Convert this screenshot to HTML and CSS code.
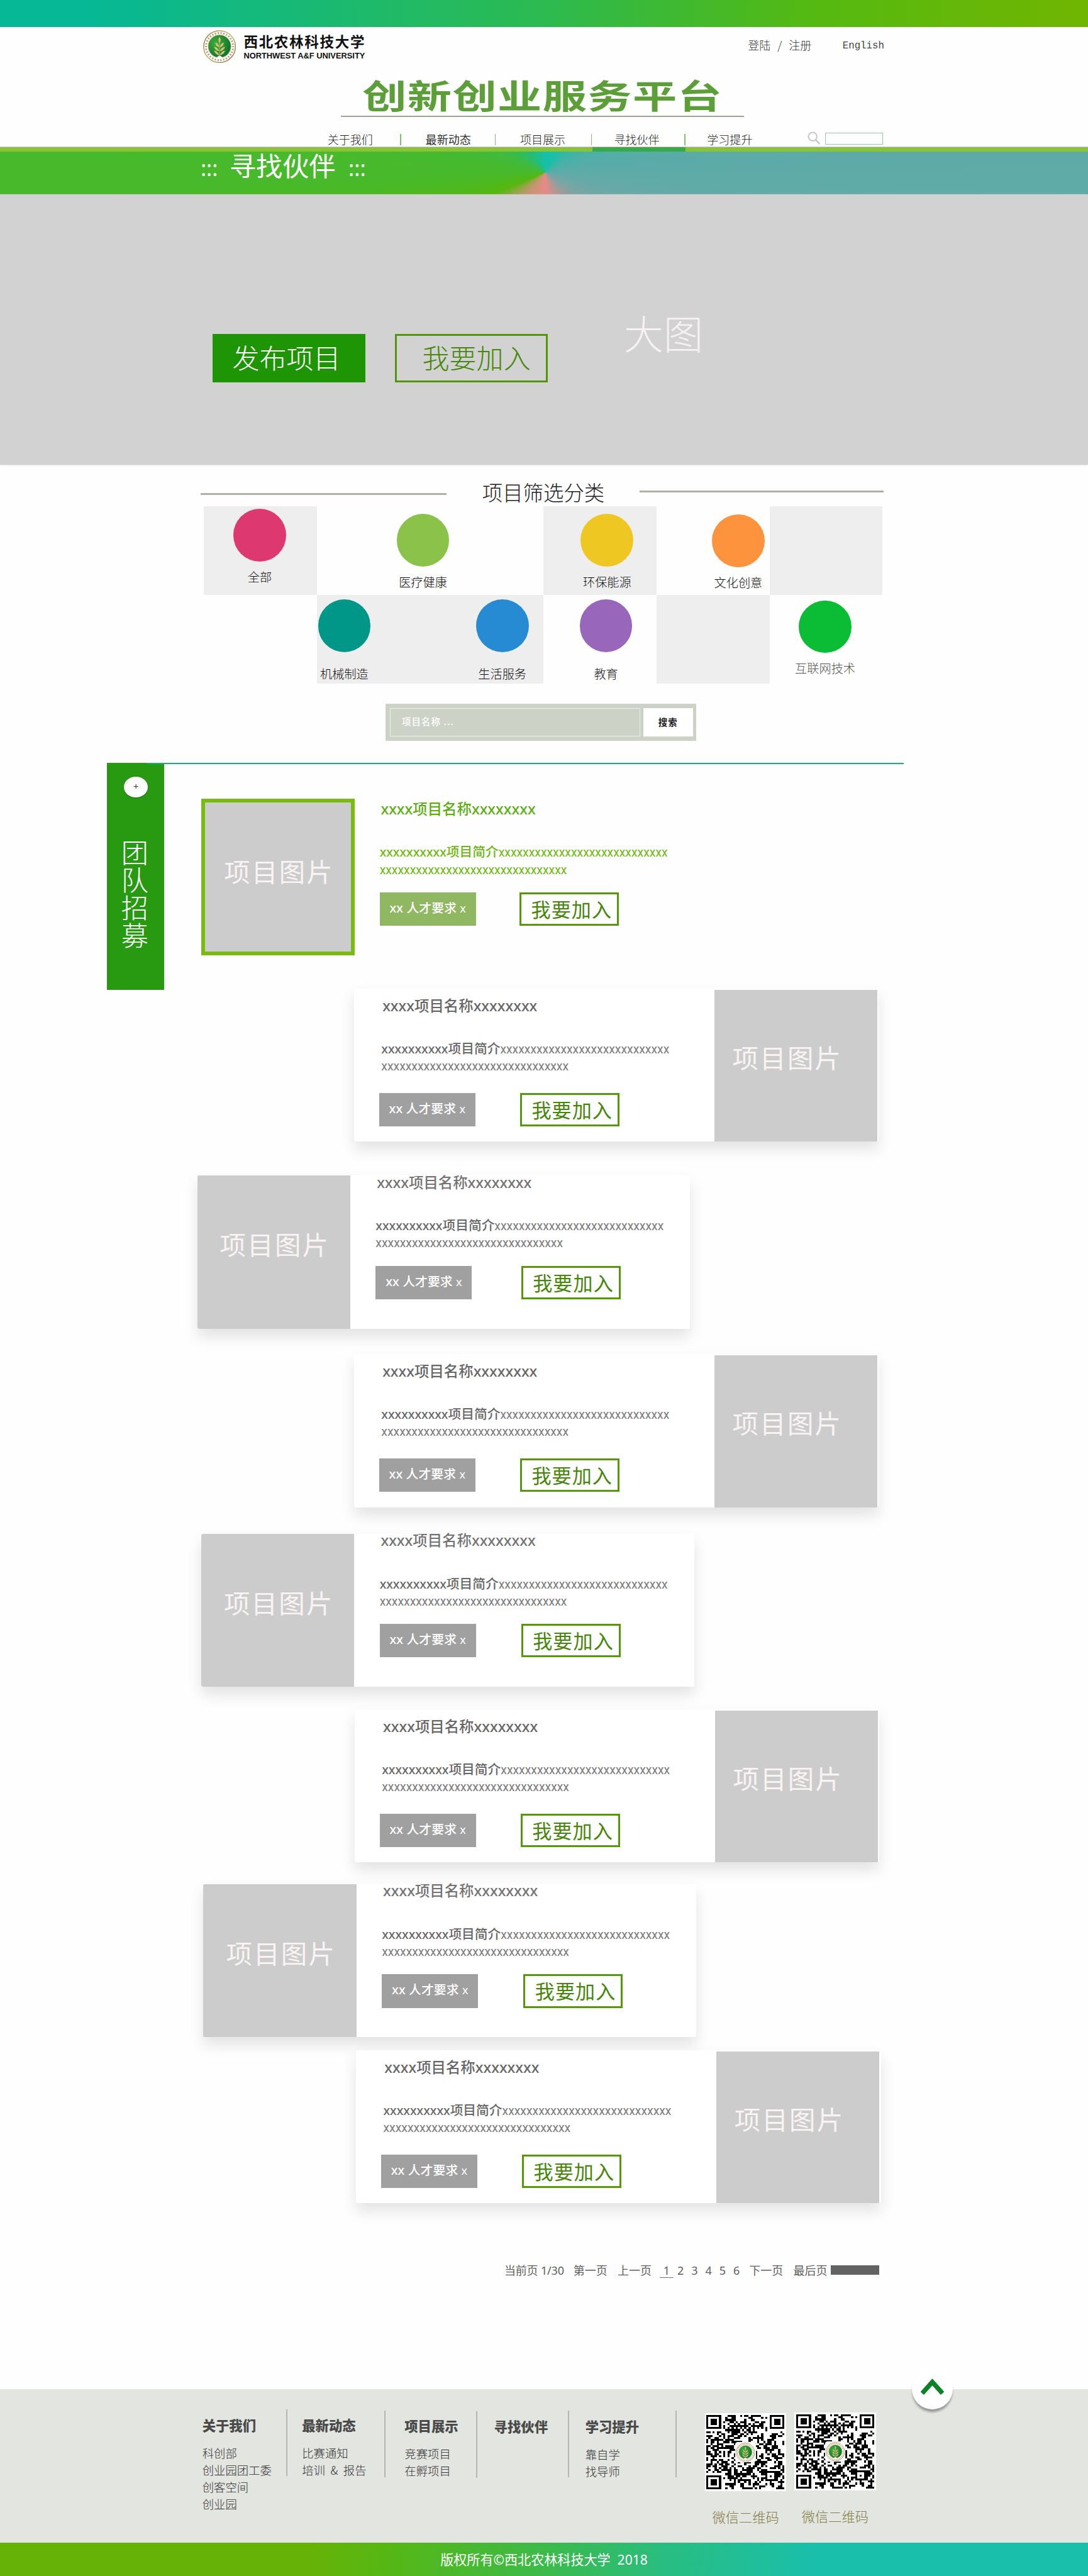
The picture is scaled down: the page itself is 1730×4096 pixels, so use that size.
FILE: index.html
```html
<!DOCTYPE html>
<html lang="zh-CN">
<head>
<meta charset="utf-8">
<title>创新创业服务平台 - 寻找伙伴</title>
<link rel="stylesheet" href="styles.css">
</head>
<body>
<svg width="0" height="0" class="defs">
  <defs>
    <linearGradient id="gold" x1="0" y1="0" x2="1" y2="1"><stop offset="0" stop-color="#8a6a2a"/><stop offset=".5" stop-color="#c9ad62"/><stop offset="1" stop-color="#86662a"/></linearGradient>
    <radialGradient id="leafbg" cx=".35" cy=".35" r=".75"><stop offset="0" stop-color="#3fae3c"/><stop offset="1" stop-color="#06702c"/></radialGradient>
    <symbol id="emblem" viewBox="0 0 58 58">
      <circle cx="29" cy="29" r="28" fill="#fff" stroke="url(#gold)" stroke-width="1.6"/>
      <circle cx="29" cy="29" r="24" fill="none" stroke="#8d7136" stroke-width="3.4" stroke-dasharray="2.2 2.8" stroke-dashoffset="1" opacity=".7"/>
      <circle cx="29" cy="28.500" r="20" fill="url(#leafbg)" stroke="#b99a50" stroke-width="1"/>
      <path d="M23 50 Q29 40 35 50 Z" fill="#fff"/>
      <g fill="#e0bd72">
        <path d="M29 12q4 5 0 11q-4-6 0-11z"/>
        <path d="M28.300 30q-6-1-7-8q6 1 7 8zM29.700 30q6-1 7-8q-6 1-7 8z"/>
        <path d="M28.300 37q-7-1-9-8q7 1 9 8zM29.700 37q7-1 9-8q-7 1-9 8z"/>
        <path d="M28.300 44q-7-1-9-8q7 1 9 8zM29.700 44q7-1 9-8q-7 1-9 8z"/>
        <path d="M28.500 22h1v24h-1z"/>
      </g>
    </symbol>
  </defs>
</svg>
<div class="page">
  <div class="topbar"></div>
  <header class="header">
    <div class="brand-row">
      <svg class="emblem"><use href="#emblem"/></svg>
      <div class="brand-text">
        <div class="brand-cn">西北农林科技大学</div>
        <div class="brand-en">NORTHWEST A&amp;F UNIVERSITY</div>
      </div>
      <div class="login">登陆<span class="slash">/</span>注册</div>
      <div class="lang">English</div>
    </div>
    <div class="site-title"><span>创新创业服务平台</span></div>
    <nav class="nav">
      <a>关于我们</a><i class="sep s1"></i>
      <a class="strong">最新动态</a><i class="sep s2"></i>
      <a>项目展示</a><i class="sep s3"></i>
      <a>寻找伙伴</a><i class="sep s4"></i>
      <a>学习提升</a>
      <svg class="lens" viewBox="0 0 24 24"><circle cx="9.500" cy="9.500" r="7.800" fill="none" stroke="#c8c8c8" stroke-width="2.400"/><path d="M15 15.500L22.500 23" stroke="#c8c8c8" stroke-width="3"/></svg>
      <div class="nav-search"></div>
    </nav>
  </header>
  <div class="greenline"><div class="active"></div></div>
  <div class="banner"><span class="dots">:::</span><h1>寻找伙伴</h1><span class="dots">:::</span></div>
  <section class="hero">
    <div class="hero-btn solid">发布项目</div>
    <div class="hero-btn outline">我要加入</div>
    <div class="hero-label">大图</div>
  </section>

  <section class="filter">
    <div class="filter-head"><i class="rule"></i><h2>项目筛选分类</h2><i class="rule r"></i></div>
    <div class="cats">
      <div class="cell g"><div class="cat c1"><i></i><b>全部</b></div></div>
      <div class="cell"><div class="cat c2"><i></i><b>医疗健康</b></div></div>
      <div class="cell"></div>
      <div class="cell g"><div class="cat c3"><i></i><b>环保能源</b></div></div>
      <div class="cell"><div class="cat c4"><i></i><b>文化创意</b></div></div>
      <div class="cell g"></div>
      <div class="cell"></div>
      <div class="cell g"><div class="cat c5"><i></i><b>机械制造</b></div></div>
      <div class="cell g"><div class="cat c6"><i></i><b>生活服务</b></div></div>
      <div class="cell"><div class="cat c7"><i></i><b>教育</b></div></div>
      <div class="cell g"></div>
      <div class="cell"><div class="cat c8"><i></i><b>互联网技术</b></div></div>
    </div>
    <div class="search"><div class="field">项目名称 ...</div><div class="go">搜索</div></div>
  </section>

  <section class="team">
    <aside class="side"><div class="plus">+</div><div class="side-text">团队招募</div></aside>
    <div class="list">
      <div class="teal"></div>
      <article class="card left featured k1"><div class="photo">项目图片</div><div class="body"><h3><u>xxxx</u>项目名称<u>xxxxxxxx</u></h3><p><u>xxxxxxxxxx</u>项目简介<span>xxxxxxxxxxxxxxxxxxxxxxxxxxxx</span><br><span>xxxxxxxxxxxxxxxxxxxxxxxxxxxxxxx</span></p><div class="acts"><div class="tag"><u>xx</u> 人才要求 <span>x</span></div><div class="join">我要加入</div></div></div></article>
      <article class="card right k2"><div class="body"><h3><u>xxxx</u>项目名称<u>xxxxxxxx</u></h3><p><u>xxxxxxxxxx</u>项目简介<span>xxxxxxxxxxxxxxxxxxxxxxxxxxxx</span><br><span>xxxxxxxxxxxxxxxxxxxxxxxxxxxxxxx</span></p><div class="acts"><div class="tag"><u>xx</u> 人才要求 <span>x</span></div><div class="join">我要加入</div></div></div><div class="photo">项目图片</div></article>
      <article class="card left k3"><div class="photo">项目图片</div><div class="body"><h3><u>xxxx</u>项目名称<u>xxxxxxxx</u></h3><p><u>xxxxxxxxxx</u>项目简介<span>xxxxxxxxxxxxxxxxxxxxxxxxxxxx</span><br><span>xxxxxxxxxxxxxxxxxxxxxxxxxxxxxxx</span></p><div class="acts"><div class="tag"><u>xx</u> 人才要求 <span>x</span></div><div class="join">我要加入</div></div></div></article>
      <article class="card right k4"><div class="body"><h3><u>xxxx</u>项目名称<u>xxxxxxxx</u></h3><p><u>xxxxxxxxxx</u>项目简介<span>xxxxxxxxxxxxxxxxxxxxxxxxxxxx</span><br><span>xxxxxxxxxxxxxxxxxxxxxxxxxxxxxxx</span></p><div class="acts"><div class="tag"><u>xx</u> 人才要求 <span>x</span></div><div class="join">我要加入</div></div></div><div class="photo">项目图片</div></article>
      <article class="card left k5"><div class="photo">项目图片</div><div class="body"><h3><u>xxxx</u>项目名称<u>xxxxxxxx</u></h3><p><u>xxxxxxxxxx</u>项目简介<span>xxxxxxxxxxxxxxxxxxxxxxxxxxxx</span><br><span>xxxxxxxxxxxxxxxxxxxxxxxxxxxxxxx</span></p><div class="acts"><div class="tag"><u>xx</u> 人才要求 <span>x</span></div><div class="join">我要加入</div></div></div></article>
      <article class="card right k6"><div class="body"><h3><u>xxxx</u>项目名称<u>xxxxxxxx</u></h3><p><u>xxxxxxxxxx</u>项目简介<span>xxxxxxxxxxxxxxxxxxxxxxxxxxxx</span><br><span>xxxxxxxxxxxxxxxxxxxxxxxxxxxxxxx</span></p><div class="acts"><div class="tag"><u>xx</u> 人才要求 <span>x</span></div><div class="join">我要加入</div></div></div><div class="photo">项目图片</div></article>
      <article class="card left k7"><div class="photo">项目图片</div><div class="body"><h3><u>xxxx</u>项目名称<u>xxxxxxxx</u></h3><p><u>xxxxxxxxxx</u>项目简介<span>xxxxxxxxxxxxxxxxxxxxxxxxxxxx</span><br><span>xxxxxxxxxxxxxxxxxxxxxxxxxxxxxxx</span></p><div class="acts"><div class="tag"><u>xx</u> 人才要求 <span>x</span></div><div class="join">我要加入</div></div></div></article>
      <article class="card right k8"><div class="body"><h3><u>xxxx</u>项目名称<u>xxxxxxxx</u></h3><p><u>xxxxxxxxxx</u>项目简介<span>xxxxxxxxxxxxxxxxxxxxxxxxxxxx</span><br><span>xxxxxxxxxxxxxxxxxxxxxxxxxxxxxxx</span></p><div class="acts"><div class="tag"><u>xx</u> 人才要求 <span>x</span></div><div class="join">我要加入</div></div></div><div class="photo">项目图片</div></article>
    </div>
  </section>

  <div class="pager">
    <span class="cur">当前页 1/30</span><span class="pg">第一页</span><span class="pg prev">上一页</span>
    <span class="num on">1</span><span class="num">2</span><span class="num">3</span><span class="num">4</span><span class="num">5</span><span class="num">6</span>
    <span class="pg next">下一页</span><span class="pg last">最后页</span><i class="block"></i>
  </div>

  <footer class="footer">
    <div class="fcol f1"><h4>关于我们</h4><a>科创部</a><a>创业园团工委</a><a>创客空间</a><a>创业园</a></div><i class="fsep p1"></i>
    <div class="fcol f2"><h4>最新动态</h4><a>比赛通知</a><a>培训<em>&amp;</em>报告</a></div><i class="fsep p2"></i>
    <div class="fcol f3"><h4>项目展示</h4><a>竞赛项目</a><a>在孵项目</a></div><i class="fsep p3"></i>
    <div class="fcol f4"><h4>寻找伙伴</h4></div><i class="fsep p2"></i>
    <div class="fcol f5"><h4>学习提升</h4><a>靠自学</a><a>找导师</a></div><i class="fsep p2"></i>
    <div class="qr q1"><div class="code"><svg class="qrsvg" viewBox="0 0 37 37" preserveAspectRatio="none" shape-rendering="crispEdges"></svg><div class="mark"><svg><use href="#emblem"/></svg></div></div><span>微信二维码</span></div>
    <div class="qr q2"><div class="code"><svg class="qrsvg" viewBox="0 0 37 37" preserveAspectRatio="none" shape-rendering="crispEdges"></svg><div class="mark"><svg><use href="#emblem"/></svg></div></div><span>微信二维码</span></div>
    <div class="totop"><svg viewBox="0 0 40 30"><path d="M2.500 25.500L20 6L37.500 25.500" fill="none" stroke="#0b8128" stroke-width="8"/></svg></div>
  </footer>
  <div class="bottombar">版权所有©西北农林科技大学&nbsp; 2018</div>
</div>
<script src="qr.js"></script>
</body>
</html>
```

FILE: styles.css
```css
* { box-sizing: border-box; margin: 0; padding: 0; }
html, body { background: #fefefe; overflow: hidden; }
body { font-family: "Noto Sans", "Noto Sans CJK SC", sans-serif; }
.defs { position: absolute; }
.page { zoom: .901; width: 100%; height: 4546px; overflow: hidden; background: #fefefe; }
i, em { font-style: normal; display: block; }
u { text-decoration: none; }
h1, h2, h3, h4, b { font-weight: 400; }
div, span, a, h1, h2 { white-space: nowrap; }

.topbar { height: 48px; background: linear-gradient(92deg, #06b896 8%, #2cba50 50%, #55b910 75%, #6fb603 98%); }
.header { height: 212px; border-bottom: 1.200px solid #ccc; }
.brand-row { display: flex; height: 82px; padding-left: 358px; }
.emblem { width: 58px; height: 58px; margin-top: 5px; }
.brand-text { margin-left: 14px; width: 214px; }
.brand-cn { margin-top: 10px; font: 700 25px/30px "Noto Sans CJK SC", sans-serif; letter-spacing: 1.9px; color: #111; }
.brand-en { margin-top: 3px; font: 700 14.300px/16px "Liberation Sans", sans-serif; letter-spacing: -.02px; color: #111; }
.login { margin: 20px 0 0 676px; width: 167px; display: flex; font: 300 20px/24px "Noto Sans CJK SC", sans-serif; color: #333; }
.slash { width: 32px; text-align: center; }
.lang { margin-top: 22px; font: 17.500px/24px "Liberation Mono", monospace; color: #444; }
.site-title { width: 711px; height: 77px; margin-left: 602px; border-bottom: 2.300px solid #9aa394; text-align: center; }
.site-title span { display: inline-block; font: 700 78px/80px "Noto Sans CJK SC", sans-serif; letter-spacing: 1.5px; transform: scaleY(.76); color: #5c9f39; margin-top: -5px; }
.nav { display: flex; align-items: center; height: 20px; margin-top: 29px; padding-left: 578px; }
.nav a { font: 300 20px/20px "Noto Sans CJK SC", sans-serif; width: 80px; color: #222; margin-top: -2px; }
.nav a.strong { font-weight: 400; color: #333; }
.sep { width: 2px; height: 20px; background: #7fc16c; }
.s1 { margin: 0 43px 0 48px; }
.s2 { margin: 0 43px 0 42px; }
.s3 { margin: 0 39px 0 45px; }
.s4 { margin: 0 38px 0 44px; }
.lens { width: 23px; height: 23px; margin: -4px 0 0 97px; }
.nav-search { width: 102px; height: 21px; margin: -3px 0 0 8px; border: 1.200px solid #93cba3; }
.greenline { height: 8px; background: #8ac23b; }
.active { width: 165px; height: 8px; margin-left: 1045px; background: #3ba94b; }
.banner { height: 75px; display: flex; padding-left: 354px; color: #fff; background: conic-gradient(from 0deg at 962px 37px, #17bfa8 0deg, #17bfa8 25deg, #45b2a8 60deg, #58aca8 80deg, #64aaa8 100deg, #78a5a4 120deg, #9a9d9b 140deg, #e08c87 172deg, #e58b85 188deg, #c59570 220deg, #9aa34c 236deg, #55b80e 248deg, #48b92a 268deg, #45ba30 280deg, #3dbb42 296deg, #22bd7d 325deg, #17bfa8 360deg); }
.banner h1 { font: 400 46.800px/70px "Noto Sans CJK SC", sans-serif; width: 188px; margin: -13px 22px 0 20px; }
.dots { font-size: 38px; line-height: 60px; width: 31px; margin-top: -2px; }
.hero { height: 477px; padding: 246px 0 0 375px; display: flex; background: #d2d2d2; box-shadow: 0 1px 3px #d2d2d2; }
.hero-btn { width: 270px; height: 86px; font: 300 47.800px/80px "Noto Sans CJK SC", sans-serif; }
.solid { background: #1e9504; color: #fff; padding-left: 35px; }
.outline { margin-left: 52px; border: 3.400px solid #4f9706; color: #46890a; padding-left: 45px; line-height: 74px; }
.hero-label { margin: -45px 0 0 134px; font: 300 70px/84px "Noto Sans CJK SC", sans-serif; color: #f7f1f1; }

.filter { height: 526px; padding-top: 26px; }
.filter-head { display: flex; height: 48px; padding-left: 354px; }
.filter-head h2 { width: 216px; margin: -2px 62px 0 63px; font: 300 36px/48px "Noto Sans CJK SC", sans-serif; color: #222; }
.rule { width: 434px; height: 3.300px; margin-top: 24px; background: #acb3a4; }
.rule.r { width: 430px; margin-top: 20px; }
.cats { display: grid; grid-template-columns: repeat(6, 199.600px); grid-template-rows: 156.500px 156.500px; margin-left: 360px; }
.cell.g { background: #eee; }
.cat { width: 120px; display: flex; flex-direction: column; align-items: center; }
.cat i { width: 93px; height: 93px; border-radius: 50%; flex: none; }
.cat b { font: 300 21.300px/24px "Noto Sans CJK SC", sans-serif; margin-top: 15.500px; color: #111; }
.c1 { margin: 4px 0 0 38.400px; } .c1 i { background: #dd386f; }
.c2 { margin: 13px 0 0 126.900px; } .c2 i { background: #8bc34a; }
.c3 { margin: 13px 0 0 52.700px; } .c3 i { background: #eec722; }
.c4 { margin: 14px 0 0 84.600px; } .c4 i { background: #fd933c; }
.c5 { margin: 7.500px 0 0 -12px; } .c5 i { background: #009688; }
.c6 { margin: 7.500px 0 0 67.300px; } .c6 i { background: #268bd2; }
.c7 { margin: 7.500px 0 0 50.700px; } .c7 i { background: #9866ba; }
.c8 { margin: 9px 0 0 38.300px; } .c8 i { background: #0abd34; }
.c5 b, .c6 b, .c7 b { margin-top: 27px; }
.c8 b { color: #555; }
.search { display: flex; width: 549px; height: 66px; margin: 35px 0 0 680px; padding: 8px 6px 8px 8px; background: #cdd2c6; }
.field { width: 442px; height: 50px; padding-left: 20px; border: 1.500px solid #ebeee9; font: 500 16px/44px "Noto Sans CJK SC", sans-serif; letter-spacing: 1.300px; color: #fff; }
.go { width: 88px; margin-left: 5px; background: #fff; text-align: center; font: 700 16px/48px "Noto Sans CJK SC", sans-serif; letter-spacing: 1.300px; color: #1a1a1a; }

.team { display: flex; height: 2544px; padding-left: 189px; }
.side { width: 101px; height: 401px; background: #289a12; padding-top: 25px; flex: none; }
.plus { width: 42px; height: 36px; margin-left: 30px; border-radius: 50%; background: #fff; text-align: center; font-size: 16px; line-height: 36px; color: #333; box-shadow: 0 1px 2px rgba(0,0,0,.3); }
.side-text { width: 49px; margin: 70px 0 0 25px; font: 300 48px/49px "Noto Sans CJK SC", sans-serif; white-space: normal; word-break: break-all; color: #fff; }
.teal { width: 1335px; height: 2.300px; margin: 0 0 -.3px -30px; background: #12b36e; position: relative; }
.card { display: flex; height: 270px; border-radius: 3px; background: #fff; box-shadow: 0 14px 26px rgba(0,0,0,.11); color: #666; }
.photo { flex: none; width: 270px; height: 270px; background: #ccc; text-align: center; font: 400 46px/241px "Noto Sans CJK SC", sans-serif; letter-spacing: 2.500px; padding-left: 4px; color: #f9f3f3; }
.left { width: 870px; }
.left .photo { border-radius: 3px 0 0 3px; }
.left .body { padding-left: 45px; margin-top: -3px; }
.right { width: 926px; }
.right .body { width: 636px; flex: none; padding: 15px 0 0 44px; }
.right .photo { width: 287px; height: 268px; margin-top: 2px; line-height: 237px; padding: 0 30px 0 0; }
.card h3 { height: 30px; font: 500 26px/30px "Noto Sans", "Noto Sans CJK SC", sans-serif; padding-left: 2px; white-space: nowrap; }
.left h3 { color: #737373; }
.right h3 { padding-left: 6px; }
.card p { height: 62px; margin-top: 46px; font: 500 23px/30px "Noto Sans", "Noto Sans CJK SC", sans-serif; white-space: nowrap; }
.card u, .card p span, .tag span { line-height: 0; }
.card p u { font-size: 21.700px; }
.card p span { font-family: Roboto, sans-serif; font-size: 21.500px; font-weight: 400; color: #7a7a7a; }
.right p { padding-left: 4px; }
.acts { display: flex; margin-top: 24px; gap: 80px; }
.right .acts { margin-top: 31px; gap: 79px; }
.tag { width: 170px; height: 59px; background: #a0a0a0; color: #fff; text-align: center; font: 500 22px/56px "Noto Sans", "Noto Sans CJK SC", sans-serif; letter-spacing: .1px; }
.tag span { font-weight: 400; font-size: 20px; }
.join { width: 175px; height: 59px; border: 3.400px solid #559808; color: #46860a; font: 400 34.500px/50px "Noto Sans CJK SC", sans-serif; letter-spacing: 1.200px; padding-left: 17px; }
.featured { height: 276px; width: 870px; background: none; box-shadow: none; color: #60b010; }
.featured .photo { width: 271px; height: 276px; border: 7px solid #79bc10; border-radius: 0; line-height: 241px; }
.featured .body { padding-left: 44px; margin-top: 3px; }
.featured h3 { color: #5cae10; }
.card.featured p, .card.featured p span { color: #6cb80c; }
.featured .tag { background: #90b761; }
.k1 { margin: 62px 0 0 65px; } .k1 .acts { gap: 77px; }
.k2 { margin: 59px 0 0 335px; }
.k3 { margin: 60px 0 0 58px; } .k3 .acts { gap: 87px; }
.k4 { margin: 45px 0 0 335px; }
.k5 { margin: 47px 0 0 65px; }
.k6 { margin: 40px 0 0 336px; }
.k7 { margin: 38.500px 0 0 69px; }
.k8 { margin: 23px 0 0 338.500px; }

.pager { display: flex; height: 326px; padding: 102px 0 0 890px; font: 400 20px/30px "Noto Sans", "Noto Sans CJK SC", sans-serif; color: #5f5f5f; }
.cur { width: 122px; letter-spacing: -.2px; }
.pg { width: 78px; }
.prev { width: 74px; }
.num { width: 24.700px; height: 28px; text-align: center; }
.num.on { border-bottom: 1.200px solid #777; line-height: 30px; }
.next { margin-left: 10px; }
.last { width: 66px; }
.block { width: 85px; height: 16px; margin-top: 6px; background: #636363; }

.footer { display: flex; height: 271px; background: #e2e5e0; padding-left: 357px; position: relative; }
.fcol h4 { font: 900 23.700px/30px "Noto Sans CJK SC", sans-serif; margin-bottom: 20px; color: #4a4a4a; }
.fcol a { display: flex; font: 300 20.400px/30px "Noto Sans CJK SC", sans-serif; color: #333; }
.fcol em { width: 32px; text-align: center; }
.fcol { padding-top: 48px; }
.f1 { width: 148px; } .f2 { width: 145px; } .f3 { width: 126px; padding-top: 49px; } .f4 { width: 130px; padding-top: 50px; } .f5 { width: 159px; padding-top: 50px; }
.fsep { width: 2px; height: 118px; background: #b3b6b3; flex: none; }
.p1 { margin: 36px 26px 0 0; }
.p2 { margin: 38px 34px 0 0; }
.p3 { margin: 39px 30px 0 0; }
.f4 + .p2 { margin-right: 29px; }
.f5 + .p2 { margin-right: 50px; }
.qr { width: 144px; margin-top: 43px; text-align: center; flex: none; }
.q2 { margin: 42px 0 0 14px; }
.code { height: 137px; padding: 3px; background: #fff; display: grid; }
.qrsvg { width: 138px; height: 131px; grid-area: 1 / 1; }
.mark { grid-area: 1 / 1; place-self: center; width: 36px; height: 36px; background: #fff; border-radius: 5px; box-shadow: 0 0 2px #999; padding: 1px; }
.mark svg { width: 34px; height: 34px; display: block; }
.qr span { display: block; margin-top: 30px; font: 300 23.600px/30px "Noto Sans CJK SC", sans-serif; color: #857e48; }
.totop { position: absolute; left: 1609px; top: -37px; width: 73px; height: 73px; border-radius: 50%; background: #fff; box-shadow: 0 6px 4px -1px #999; padding: 19px 16px; }
.totop svg { width: 41px; height: 31px; display: block; }
.bottombar { height: 61px; text-align: center; font: 400 23.400px/60px "Noto Sans", "Noto Sans CJK SC", sans-serif; color: #fff; background: linear-gradient(100deg, #67b206 28%, #57b712 35%, #3cba4a 50%, #28bd80 61%, #1abfac 75%); }
```

FILE: qr.js
```javascript
// Builds the 37x37 module pattern used by both footer codes.
(function () {
  var n = 37, seed = 20184, d = '';
  function rnd() { seed = (seed * 1103515245 + 12345) % 2147483648; return seed / 2147483648; }
  function finder(x, y) {
    var a = Math.max(Math.abs(x - 3), Math.abs(y - 3));
    return a === 3 || a <= 1;
  }
  for (var y = 0; y < n; y++) {
    for (var x = 0; x < n; x++) {
      var on = rnd() < 0.52;
      if (x < 8 && y < 8) on = x < 7 && y < 7 && finder(x, y);
      else if (x > 28 && y < 8) on = x > 29 && y < 7 && finder(x - 30, y);
      else if (x < 8 && y > 28) on = x < 7 && y > 29 && finder(x, y - 30);
      else if (x > 27 && x < 33 && y > 27 && y < 33) on = Math.max(Math.abs(x - 30), Math.abs(y - 30)) !== 1;
      else if (x === 6 || y === 6) on = (x + y) % 2 === 0;
      if (on) d += 'M' + x + ' ' + y + 'h1v1h-1z';
    }
  }
  document.querySelectorAll('.qrsvg').forEach(function (svg) {
    svg.innerHTML = '<path fill="#000" d="' + d + '"/>';
  });
})();
```
